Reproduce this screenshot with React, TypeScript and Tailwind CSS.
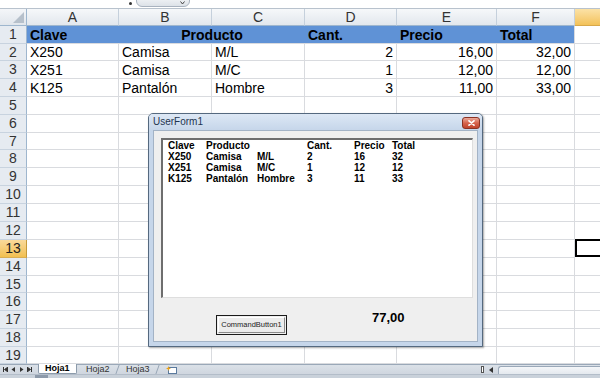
import React from 'react'

const COLS = [
  { key: 'A', w: 'w-[92px]' },
  { key: 'B', w: 'w-[93px]' },
  { key: 'C', w: 'w-[93px]' },
  { key: 'D', w: 'w-[92px]' },
  { key: 'E', w: 'w-[100px]' },
  { key: 'F', w: 'w-[78px]' },
]

const DATA = [
  ['X250', 'Camisa', 'M/L', '2', '16,00', '32,00'],
  ['X251', 'Camisa', 'M/C', '1', '12,00', '12,00'],
  ['K125', 'Pantalón', 'Hombre', '3', '11,00', '33,00'],
]

const LIST = [
  ['Clave', 'Producto', '', 'Cant.', 'Precio', 'Total'],
  ['X250', 'Camisa', 'M/L', '2', '16', '32'],
  ['X251', 'Camisa', 'M/C', '1', '12', '12'],
  ['K125', 'Pantalón', 'Hombre', '3', '11', '33'],
]

const LIST_W = ['w-[38px]', 'w-[51px]', 'w-[50px]', 'w-[47px]', 'w-[38px]', 'w-[40px]']

const SHORT_ROWS = [2, 7, 15, 19]

function RowHeader({ n }: { n: number }) {
  const sel = n === 13
  return (
    <div
      className={`w-[27px] shrink-0 h-full flex items-center justify-center border-r border-b text-[14px] ${
        sel
          ? 'bg-gradient-to-b from-[#f9d99a] to-[#f2c04f] border-r-[#c59a3a] border-b-[#d8ad52] text-[#222]'
          : 'bg-[#e6ebf1] border-r-[#9eb6ce] border-b-[#c8d3df] text-[#333]'
      }`}
    >
      {n}
    </div>
  )
}

function Cell({ w, children, right }: { w: string; children?: React.ReactNode; right?: boolean }) {
  return (
    <div
      className={`${w} shrink-0 h-full border-r border-b border-[#d9dbdf] flex items-end leading-[16px] px-[3px] text-[14px] text-black ${
        right ? 'justify-end' : 'justify-start'
      }`}
    >
      {children}
    </div>
  )
}

function TopStrip() {
  return (
    <div className="h-[9px] shrink-0 bg-white border-b border-[#b8c2cd] relative">
      <div className="absolute left-[129px] top-[2px] w-[3px] h-[3px] rounded-full bg-[#333]" />
      <div className="absolute left-[136px] top-[-4px] w-[54px] h-[11px] rounded-b-[6px] border border-[#a9b3bf] bg-gradient-to-b from-[#f4f6f8] to-[#dde2e8] flex justify-end items-end pr-[4px] pb-[1px]">
        <svg width="5" height="4" viewBox="0 0 5 4">
          <path d="M0.5 0.5 L2.5 3 L4.5 0.5" fill="none" stroke="#444" strokeWidth="1" />
        </svg>
      </div>
    </div>
  )
}

function ColumnHeaders() {
  return (
    <div className="h-[17px] shrink-0 flex">
      <div className="w-[27px] shrink-0 h-full bg-gradient-to-b from-[#f4f6f9] to-[#e1e6ec] border-r border-b border-[#9eb6ce] flex items-end justify-end p-[2px]">
        <svg width="11" height="11" viewBox="0 0 11 11">
          <path d="M11 0 L11 11 L0 11 Z" fill="#b6c0cb" />
        </svg>
      </div>
      {COLS.map((c) => (
        <div
          key={c.key}
          className={`${c.w} shrink-0 h-full bg-gradient-to-b from-[#f6f8fa] to-[#e2e7ed] border-r border-r-[#c5d0dc] border-b border-b-[#9eb6ce] flex items-center justify-center text-[14px] text-[#333]`}
        >
          {c.key}
        </div>
      ))}
      <div className="w-[60px] shrink-0 h-full bg-gradient-to-b from-[#fbe2a6] to-[#f3c258] border-b border-b-[#d8a84a]" />
    </div>
  )
}

function SheetRow({ n }: { n: number }) {
  const h = SHORT_ROWS.includes(n) ? 'h-[17px]' : 'h-[18px]'
  const g = (
    <div
      className={`w-[60px] shrink-0 h-full ${
        n === 13 ? 'border-2 border-black -mt-px' : 'border-b border-[#d9dbdf]'
      }`}
    />
  )
  if (n === 1) {
    return (
      <div className={`${h} shrink-0 flex`}>
        <RowHeader n={n} />
        <div className="flex h-full bg-[#5f92d6] border-b border-[#d9dbdf] text-[14px] font-bold text-black leading-[16px]">
          <div className="w-[92px] shrink-0 h-full flex items-end px-[3px]">Clave</div>
          <div className="w-[186px] shrink-0 h-full flex items-end justify-center">Producto</div>
          <div className="w-[92px] shrink-0 h-full flex items-end px-[3px]">Cant.</div>
          <div className="w-[100px] shrink-0 h-full flex items-end px-[3px]">Precio</div>
          <div className="w-[78px] shrink-0 h-full flex items-end px-[3px] border-r border-[#d9dbdf]">Total</div>
        </div>
        {g}
      </div>
    )
  }
  const d = DATA[n - 2]
  return (
    <div className={`${h} shrink-0 flex`}>
      <RowHeader n={n} />
      {COLS.map((c, i) => (
        <Cell key={c.key} w={c.w} right={i >= 3}>
          {d ? d[i] : null}
        </Cell>
      ))}
      {g}
    </div>
  )
}

function UserForm() {
  return (
    <div className="absolute left-[148px] top-[113px] w-[335px] h-[234px] flex flex-col border border-[#55697f] rounded-t-[5px] bg-[#c6d6ea] shadow-[1px_1px_2px_rgba(0,0,0,0.35)]">
      <div className="h-[16px] shrink-0 flex items-center bg-gradient-to-b from-[#dde8f5] to-[#c6d6ea] rounded-t-[4px]">
        <span className="pl-[4px] text-[10px] text-[#1f3550] leading-none">UserForm1</span>
        <div className="ml-auto mr-[2px] mt-[1px] w-[18px] h-[12px] rounded-[3px] border border-[#8a3223] bg-gradient-to-b from-[#e9a899] via-[#d6634c] to-[#c0432c] flex items-center justify-center">
          <svg width="7" height="6" viewBox="0 0 7 6">
            <path d="M1 0.8 L6 5.2 M6 0.8 L1 5.2" stroke="#fff" strokeWidth="1.6" strokeLinecap="round" />
          </svg>
        </div>
      </div>
      <div className="flex-1 mx-[4px] mb-[4px] bg-[#efefef] border border-[#a3b3c6] flex flex-col pl-[7px] pt-[7px]">
        <div className="w-[312px] h-[160px] shrink-0 bg-white border-l-2 border-t-2 border-l-[#6e6e6e] border-t-[#6e6e6e] border-r border-b border-r-[#dedede] border-b-[#dedede] pl-[5px] font-bold text-[10px] leading-[11px] text-black">
          {LIST.map((r, ri) => (
            <div key={ri} className="flex h-[11px]">
              {r.map((v, ci) => (
                <div key={ci} className={`${LIST_W[ci]} shrink-0 whitespace-nowrap`}>
                  {v}
                </div>
              ))}
            </div>
          ))}
        </div>
        <div className="flex items-start mt-[17px]">
          <div className="ml-[55px] w-[71px] h-[20px] shrink-0 border border-[#1a1a1a] p-px bg-[#efefef]">
            <div className="w-full h-full border border-t-white border-l-white border-r-[#8a8a8a] border-b-[#8a8a8a] bg-[#ececec] flex items-center justify-center text-[7.5px] text-[#222] leading-none">
              CommandButton1
            </div>
          </div>
          <div className="ml-[85px] -mt-[5px] text-[13px] font-bold text-black leading-[16px]">77,00</div>
        </div>
      </div>
    </div>
  )
}

function TabBar() {
  return (
    <div className="h-[14px] shrink-0 flex flex-col bg-[#d3dae3]">
      <div className="h-[10px] flex items-start bg-gradient-to-b from-[#dbe1e8] to-[#cfd6df] border-t border-[#9aa8b8]">
        <div className="w-[38px] h-full flex items-center gap-[3px] pl-[3px]">
          <svg width="5" height="5" viewBox="0 0 5 5">
            <path d="M0.5 0 V5 M5 0 L1.5 2.5 L5 5 Z" stroke="#333" strokeWidth="1" fill="#333" />
          </svg>
          <svg width="5" height="5" viewBox="0 0 5 5">
            <path d="M4 0 L0.5 2.5 L4 5 Z" fill="#333" />
          </svg>
          <svg width="5" height="5" viewBox="0 0 5 5">
            <path d="M1 0 L4.5 2.5 L1 5 Z" fill="#333" />
          </svg>
          <svg width="5" height="5" viewBox="0 0 5 5">
            <path d="M4.5 0 V5 M0 0 L3.5 2.5 L0 5 Z" stroke="#333" strokeWidth="1" fill="#333" />
          </svg>
        </div>
        <div className="h-[10px] -mt-px px-[6px] bg-white border-x border-b border-[#8c9bab] rounded-b-[2px] text-[9px] font-bold leading-[9px] text-black flex items-center">
          Hoja1
        </div>
        <div className="h-[9px] px-[7px] text-[9px] leading-[9px] text-[#333] border-r border-[#98a6b6] -skew-x-[20deg] ml-[2px]">
          <span className="inline-block skew-x-[20deg]">Hoja2</span>
        </div>
        <div className="h-[9px] px-[7px] text-[9px] leading-[9px] text-[#333] border-r border-[#98a6b6] -skew-x-[20deg] ml-[2px]">
          <span className="inline-block skew-x-[20deg]">Hoja3</span>
        </div>
        <div className="ml-[8px] h-[9px] flex items-center">
          <svg width="11" height="8" viewBox="0 0 11 8">
            <rect x="2.5" y="1.5" width="8" height="6" fill="#fff" stroke="#5b7a9e" />
            <path d="M2.5 0 L3.2 1.8 L5 2.5 L3.2 3.2 L2.5 5 L1.8 3.2 L0 2.5 L1.8 1.8 Z" fill="#e8a21e" />
          </svg>
        </div>
        <div className="ml-auto w-[120px] h-full flex items-center">
          <div className="w-[3px] h-[7px] ml-[1px] border border-[#555] bg-white" />
          <svg className="ml-[5px]" width="4" height="6" viewBox="0 0 4 6">
            <path d="M4 0 L0 3 L4 6 Z" fill="#333" />
          </svg>
          <div className="ml-[5px] flex-1 h-[9px] mt-[1px] rounded-tl-[3px] border-t border-l border-[#9aa8b8] bg-gradient-to-b from-[#f4f6f9] to-[#e2e7ed]" />
        </div>
      </div>
      <div className="h-[4px] flex bg-[#c9d1da] border-t border-[#b3bdc9]">
        <div className="ml-[35px] w-[13px] h-full bg-[#8d9aaa]" />
      </div>
    </div>
  )
}

export default function App() {
  const rows = Array.from({ length: 19 }, (_, i) => i + 1)
  return (
    <div className="w-[600px] h-[378px] relative overflow-hidden bg-white flex flex-col font-['Liberation_Sans',Arial,sans-serif]">
      <TopStrip />
      <ColumnHeaders />
      <div className="flex flex-col shrink-0">
        {rows.map((n) => (
          <SheetRow key={n} n={n} />
        ))}
      </div>
      <TabBar />
      <UserForm />
    </div>
  )
}
